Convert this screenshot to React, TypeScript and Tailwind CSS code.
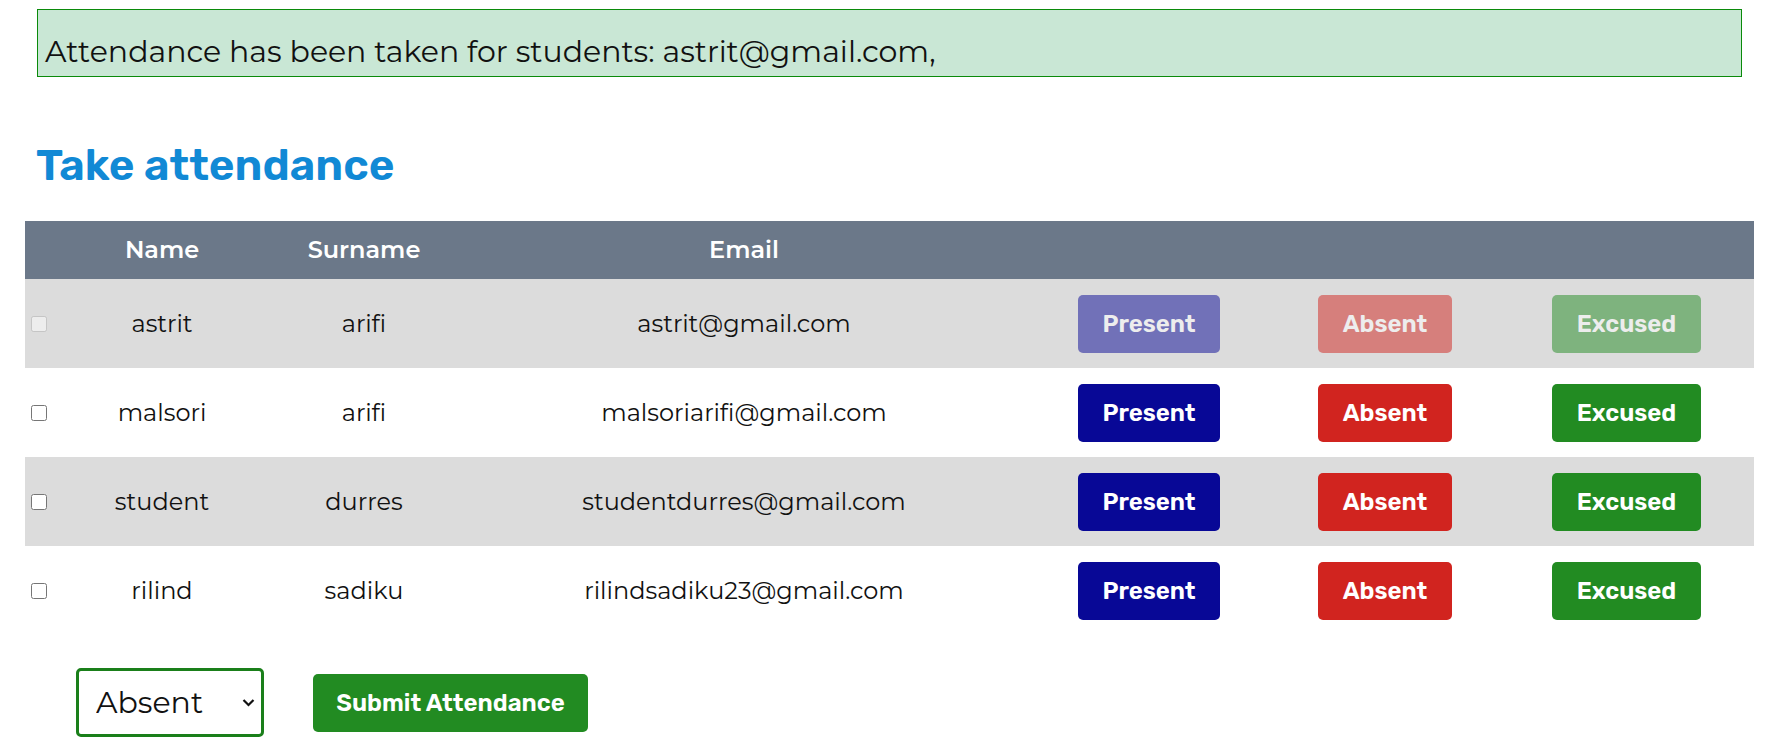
import React, { useState } from 'react';

interface Student {
  name: string;
  surname: string;
  email: string;
  taken?: boolean;
}

const students: Student[] = [
  { name: 'astrit', surname: 'arifi', email: 'astrit@gmail.com', taken: true },
  { name: 'malsori', surname: 'arifi', email: 'malsoriarifi@gmail.com' },
  { name: 'student', surname: 'durres', email: 'studentdurres@gmail.com' },
  { name: 'rilind', surname: 'sadiku', email: 'rilindsadiku23@gmail.com' },
];

const cols = 'grid grid-cols-[31px_212px_192px_568px_242px_230px_253px] items-center';
const btn = "h-[58px] rounded-[5px] text-white text-[24px] font-semibold font-['Rubik','Roboto',sans-serif]";

const App: React.FC = () => {
  const [status, setStatus] = useState('Absent');

  return (
    <div className="min-h-screen bg-white font-['Montserrat','Inter',sans-serif] text-[#111]">
      {/* Success message */}
      <div className="mx-[37px] mt-[9px] h-[68px] border border-[#0a8a0a] bg-[#c9e7d5] px-[7px] pt-[24px]">
        <p className="text-[30px] leading-[36px]">
          Attendance has been taken for students: astrit@gmail.com,
        </p>
      </div>

      <h1 className="ml-[36px] mt-[65px] text-[44px] leading-[47px] font-semibold text-[#1189d5] font-['Rubik','Roboto',sans-serif]">
        Take attendance
      </h1>

      {/* Table */}
      <div className="mx-[25px] mt-[32px]">
        <div className={`${cols} h-[58px] bg-[#6b7889] text-white text-[24px] font-semibold`}>
          <div />
          <div className="text-center">Name</div>
          <div className="text-center">Surname</div>
          <div className="text-center">Email</div>
          <div />
          <div />
          <div />
        </div>

        {students.map((s, i) => (
          <div
            key={s.email}
            className={`${cols} h-[89px] text-[24px] ${i % 2 === 0 ? 'bg-[#dcdcdc]' : 'bg-white'}`}
          >
            <div className="flex pl-[6px]">
              <input type="checkbox" disabled={s.taken} className="h-4 w-4 m-0" />
            </div>
            <div className="text-center">{s.name}</div>
            <div className="text-center">{s.surname}</div>
            <div className="text-center">{s.email}</div>
            <div className="flex justify-center">
              <button disabled={s.taken} className={`${btn} w-[142px] bg-[#080896] ${s.taken ? 'opacity-50' : ''}`}>
                Present
              </button>
            </div>
            <div className="flex justify-center">
              <button disabled={s.taken} className={`${btn} w-[134px] bg-[#d1241f] ${s.taken ? 'opacity-50' : ''}`}>
                Absent
              </button>
            </div>
            <div className="flex justify-center">
              <button disabled={s.taken} className={`${btn} w-[149px] bg-[#228b22] ${s.taken ? 'opacity-50' : ''}`}>
                Excused
              </button>
            </div>
          </div>
        ))}
      </div>

      {/* Bottom controls */}
      <div className="flex items-center gap-[49px] ml-[76px] mt-[33px]">
        <div className="relative w-[188px] h-[69px]">
          <select
            value={status}
            onChange={(e) => setStatus(e.target.value)}
            className="appearance-none w-full h-full rounded-[5px] border-[3px] border-[#1a7f1a] bg-white pl-[17px] text-[30px] outline-none"
          >
            <option>Present</option>
            <option>Absent</option>
            <option>Excused</option>
          </select>
          <svg
            className="pointer-events-none absolute right-[9px] top-[30px]"
            width="13"
            height="9"
            viewBox="0 0 13 9"
            fill="none"
            stroke="#111"
            strokeWidth="2.2"
          >
            <polyline points="1.5,2 6.5,7 11.5,2" />
          </svg>
        </div>
        <button className={`${btn} w-[275px] bg-[#228b22]`}>Submit Attendance</button>
      </div>
    </div>
  );
};

export default App;
